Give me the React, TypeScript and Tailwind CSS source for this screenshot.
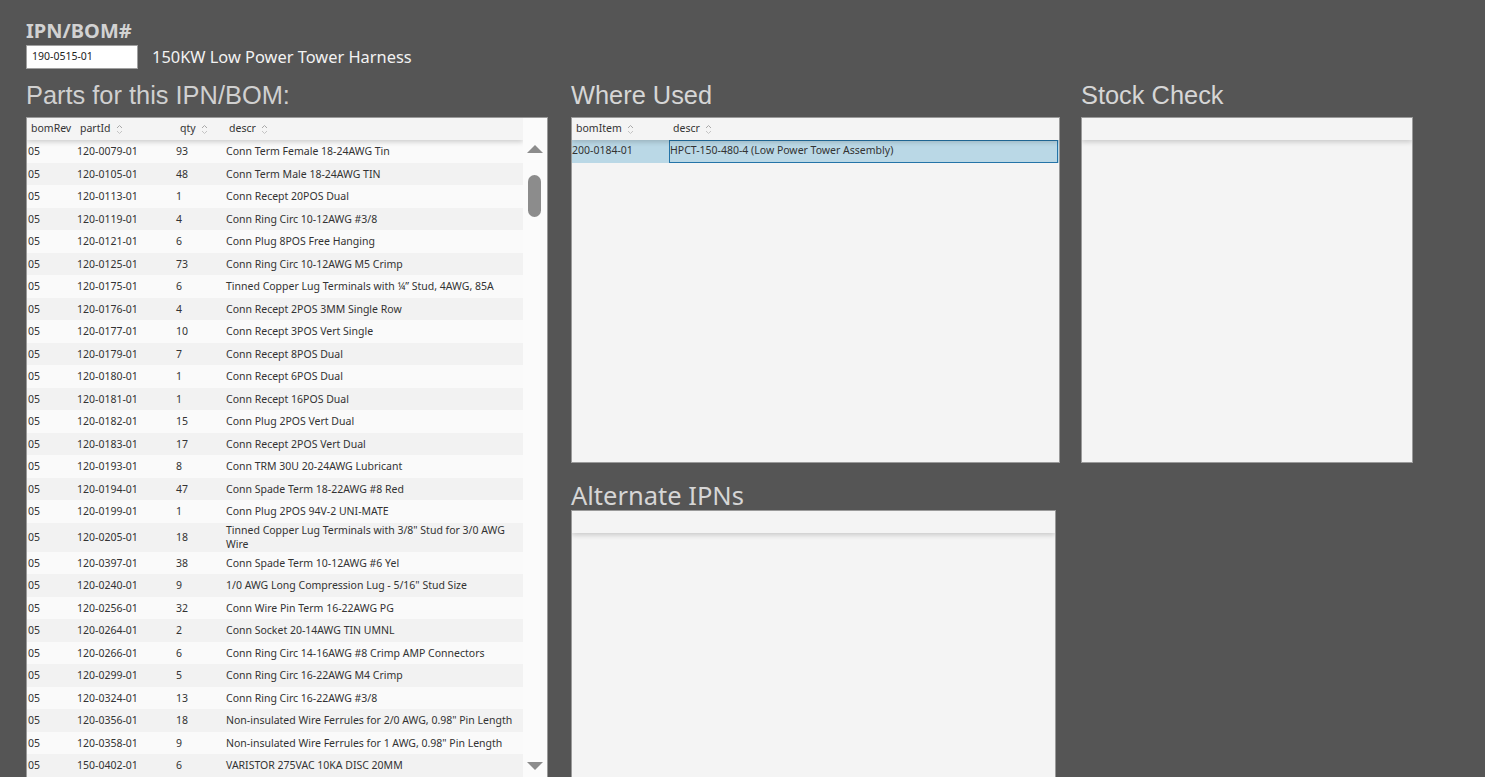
import React from "react";

const parts: [string, string, string, string][] = [
  ["05", "120-0079-01", "93", "Conn Term Female 18-24AWG Tin"],
  ["05", "120-0105-01", "48", "Conn Term Male 18-24AWG TIN"],
  ["05", "120-0113-01", "1", "Conn Recept 20POS Dual"],
  ["05", "120-0119-01", "4", "Conn Ring Circ 10-12AWG #3/8"],
  ["05", "120-0121-01", "6", "Conn Plug 8POS Free Hanging"],
  ["05", "120-0125-01", "73", "Conn Ring Circ 10-12AWG M5 Crimp"],
  ["05", "120-0175-01", "6", "Tinned Copper Lug Terminals with \u00bc\u201d Stud, 4AWG, 85A"],
  ["05", "120-0176-01", "4", "Conn Recept 2POS 3MM Single Row"],
  ["05", "120-0177-01", "10", "Conn Recept 3POS Vert Single"],
  ["05", "120-0179-01", "7", "Conn Recept 8POS Dual"],
  ["05", "120-0180-01", "1", "Conn Recept 6POS Dual"],
  ["05", "120-0181-01", "1", "Conn Recept 16POS Dual"],
  ["05", "120-0182-01", "15", "Conn Plug 2POS Vert Dual"],
  ["05", "120-0183-01", "17", "Conn Recept 2POS Vert Dual"],
  ["05", "120-0193-01", "8", "Conn TRM 30U 20-24AWG Lubricant"],
  ["05", "120-0194-01", "47", "Conn Spade Term 18-22AWG #8 Red"],
  ["05", "120-0199-01", "1", "Conn Plug 2POS 94V-2 UNI-MATE"],
  ["05", "120-0205-01", "18", "Tinned Copper Lug Terminals with 3/8\" Stud for 3/0 AWG Wire"],
  ["05", "120-0397-01", "38", "Conn Spade Term 10-12AWG #6 Yel"],
  ["05", "120-0240-01", "9", "1/0 AWG Long Compression Lug - 5/16\" Stud Size"],
  ["05", "120-0256-01", "32", "Conn Wire Pin Term 16-22AWG PG"],
  ["05", "120-0264-01", "2", "Conn Socket 20-14AWG TIN UMNL"],
  ["05", "120-0266-01", "6", "Conn Ring Circ 14-16AWG #8 Crimp AMP Connectors"],
  ["05", "120-0299-01", "5", "Conn Ring Circ 16-22AWG M4 Crimp"],
  ["05", "120-0324-01", "13", "Conn Ring Circ 16-22AWG #3/8"],
  ["05", "120-0356-01", "18", "Non-insulated Wire Ferrules for 2/0 AWG, 0.98\" Pin Length"],
  ["05", "120-0358-01", "9", "Non-insulated Wire Ferrules for 1 AWG, 0.98\" Pin Length"],
  ["05", "150-0402-01", "6", "VARISTOR 275VAC 10KA DISC 20MM"],
];

function SortIcon() {
  return (
    <svg width="7" height="11" viewBox="0 0 7 11" className="ml-[5px] shrink-0">
      <path d="M1 4 L3.5 1.5 L6 4" fill="none" stroke="#a8a8a8" strokeWidth="1" />
      <path d="M1 7 L3.5 9.5 L6 7" fill="none" stroke="#c4c4c4" strokeWidth="1" />
    </svg>
  );
}

function HeaderCell({ label, pl }: { label: string; pl: string }) {
  return (
    <div className={`flex items-center overflow-hidden whitespace-nowrap ${pl}`}>
      <span>{label}</span>
      <SortIcon />
    </div>
  );
}

export default function App() {
  return (
    <div className="h-screen w-full overflow-hidden bg-[#555555] font-['Noto_Sans',sans-serif]">
      <div className="pt-[19px] pl-[26px]">
        <div className="text-[20px] font-bold leading-[24px] text-[#d2d2d2]">IPN/BOM#</div>
        <div className="mt-[2px] flex h-[24px] items-center">
          <div className="flex h-[24px] w-[112px] items-center border border-[#a0a0a0] bg-white pl-[5px] text-[10.5px] text-[#222]">
            190-0515-01
          </div>
          <div className="ml-[14px] text-[16.4px] leading-[24px] text-[#f2f2f2]">150KW Low Power Tower Harness</div>
        </div>

        <div className="mt-[12px] flex items-start">
          {/* Parts column */}
          <div className="w-[522px]">
            <div className="h-[29px] font-['Liberation_Sans',Arial,sans-serif] text-[25.4px] leading-[29px] text-[#d0d0d0]">
              Parts for this IPN/BOM:
            </div>
            <div className="mt-[7px] flex h-[661px] border border-[#9a9a9a] bg-[#fafafa] text-[10.5px] text-[#333]">
              <div className="flex w-[496px] flex-col overflow-hidden">
                <div className="relative z-10 grid h-[22px] shrink-0 grid-cols-[48px_98px_49px_301px] bg-[#f4f4f4] text-[10.5px] text-[#333] shadow-[0_2px_5px_rgba(0,0,0,0.18)]">
                  <HeaderCell label="bomRev" pl="pl-[4px]" />
                  <HeaderCell label="partId" pl="pl-[5px]" />
                  <HeaderCell label="qty" pl="pl-[7px]" />
                  <HeaderCell label="descr" pl="pl-[7px]" />
                </div>
                {parts.map((r, i) => (
                  <div
                    key={r[1]}
                    className={`grid min-h-[22.5px] shrink-0 grid-cols-[48px_98px_49px_301px] items-center leading-[14.5px] ${
                      i % 2 === 0 ? "bg-[#fafafa]" : "bg-[#f2f2f2]"
                    }`}
                  >
                    <div className="pl-[1px] whitespace-nowrap">{r[0]}</div>
                    <div className="pl-[2px]">{r[1]}</div>
                    <div className="pl-[3px]">{r[2]}</div>
                    <div className="pl-[4px]">{r[3]}</div>
                  </div>
                ))}
              </div>
              <div className="flex w-[24px] flex-col items-center bg-[#fbfbfb] pt-[27px] pb-[7px]">
                <svg width="16" height="8" viewBox="0 0 16 8" className="ml-[-1px]">
                  <path d="M0 8 L8 0 L16 8 Z" fill="#8c8c8c" />
                </svg>
                <div className="mt-[22px] ml-[-1px] h-[42px] w-[13px] rounded-full bg-[#8c8c8c]" />
                <div className="flex-1" />
                <svg width="16" height="8" viewBox="0 0 16 8" className="ml-[-1px]">
                  <path d="M0 0 L16 0 L8 8 Z" fill="#8c8c8c" />
                </svg>
              </div>
            </div>
          </div>

          {/* Middle column */}
          <div className="ml-[23px] w-[489px]">
            <div className="h-[29px] font-['Liberation_Sans',Arial,sans-serif] text-[25.4px] leading-[29px] text-[#d6d6d6]">
              Where Used
            </div>
            <div className="mt-[7px] flex h-[346px] flex-col overflow-hidden border border-[#9a9a9a] bg-[#f4f4f4] text-[10.5px] text-[#333]">
              <div className="relative z-10 grid h-[22px] shrink-0 grid-cols-[97px_1fr] bg-[#f4f4f4] shadow-[0_2px_5px_rgba(0,0,0,0.18)]">
                <HeaderCell label="bomItem" pl="pl-[4px]" />
                <HeaderCell label="descr" pl="pl-[4px]" />
              </div>
              <div className="grid h-[22.5px] shrink-0 grid-cols-[97px_1fr] bg-[#bad8e6]">
                <div className="flex items-center whitespace-nowrap">200-0184-01</div>
                <div className="mr-[1px] flex items-center whitespace-nowrap border border-[#2474a8]">
                  HPCT-150-480-4 (Low Power Tower Assembly)
                </div>
              </div>
            </div>
            <div className="mt-[17px] h-[30px] text-[25.5px] leading-[30px] text-[#d6d6d6]">Alternate IPNs</div>
            <div className="flex h-[300px] w-[485px] flex-col overflow-hidden border border-[#9a9a9a] bg-[#f4f4f4]">
              <div className="relative z-10 h-[22px] shrink-0 bg-[#f4f4f4] shadow-[0_2px_5px_rgba(0,0,0,0.18)]" />
            </div>
          </div>

          {/* Right column */}
          <div className="ml-[21px] w-[332px]">
            <div className="h-[29px] font-['Liberation_Sans',Arial,sans-serif] text-[25.4px] leading-[29px] text-[#d6d6d6]">
              Stock Check
            </div>
            <div className="mt-[7px] flex h-[346px] flex-col overflow-hidden border border-[#9a9a9a] bg-[#f4f4f4]">
              <div className="relative z-10 h-[22px] shrink-0 bg-[#f4f4f4] shadow-[0_2px_5px_rgba(0,0,0,0.18)]" />
            </div>
          </div>
        </div>
      </div>
    </div>
  );
}
